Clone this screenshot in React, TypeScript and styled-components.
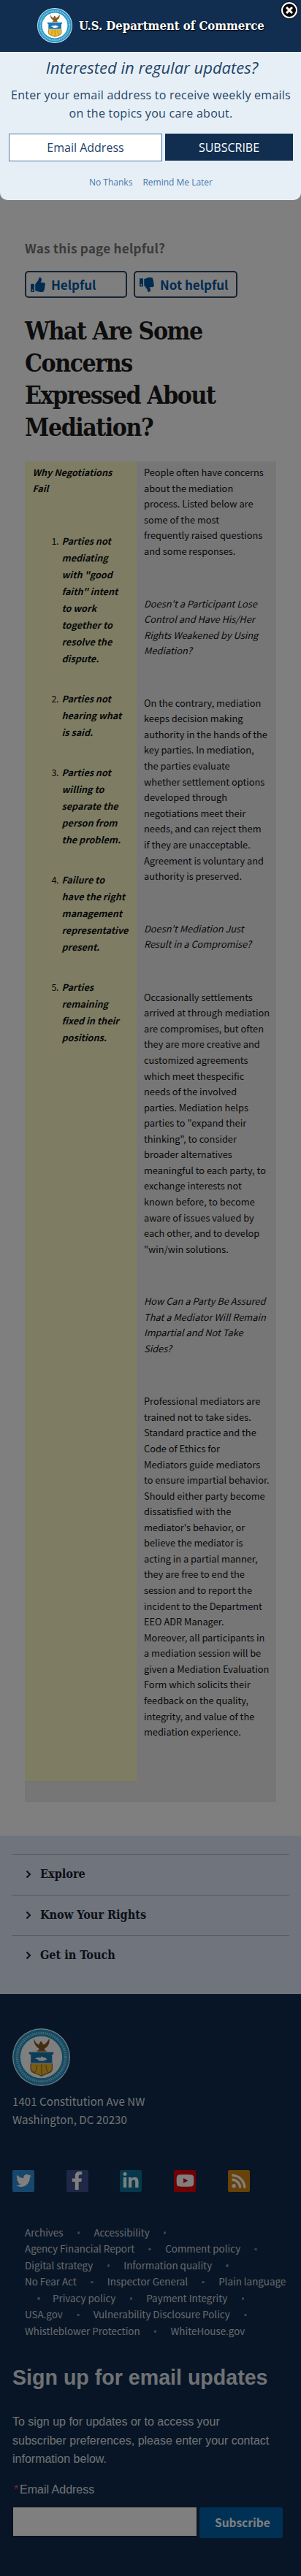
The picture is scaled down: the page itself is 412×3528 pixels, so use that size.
import React from "react";
import styled, { createGlobalStyle } from "styled-components";
import { FaThumbsUp, FaThumbsDown, FaFacebookF, FaLinkedinIn, FaTwitter, FaRss, FaYoutube } from "react-icons/fa";

const sans = `"Noto Sans CJK JP", "Noto Sans", sans-serif`;
const serif = `"DejaVu Serif Condensed", "DejaVu Serif", "Liberation Serif", serif`;

const Global = createGlobalStyle`
  *, *::before, *::after { box-sizing: border-box; }
  body { margin: 0; background: #fff; font-family: ${sans}; color: #1b1b1b; }
  p, h1, h2, ol, ul { margin: 0; padding: 0; }
  svg { display: block; flex: none; }
`;

const Page = styled.div`
  position: relative;
  width: 412px;
  height: 3528px;
  overflow: hidden;
`;
const Overlay = styled.div`
  position: absolute;
  inset: 0;
  background: rgba(0, 0, 0, 0.5);
`;
const Top = styled.div`
  position: absolute;
  inset: 0 0 auto 0;
`;
const Header = styled.header`
  height: 71px;
  background: #112e51;
  border-bottom: 1px solid #0b2341;
  display: flex;
  align-items: center;
  padding-left: 51px;
  gap: 9px;
`;
const Brand = styled.div`
  font: bold 16.6px/24px ${serif};
  color: #fff;
  white-space: nowrap;
  text-shadow: 1px 1px 2px #000;
`;
const Close = styled.button`
  position: absolute;
  top: 3px;
  right: 5px;
  width: 22px;
  height: 22px;
  padding: 0;
  border: 2px solid #fff;
  border-radius: 50%;
  background: #000;
  display: grid;
  place-items: center;
  box-shadow: 0 0 3px #000;
`;
const Modal = styled.section`
  height: 203px;
  background: #e7eff6;
  border-radius: 0 0 10px 10px;
  padding: 0 11px 0 12px;
  text-align: center;
  font-family: "Open Sans", sans-serif;
  color: #1f4468;
  white-space: nowrap;
`;
const ModalTitle = styled.h2`
  font: italic 400 22px/30px "Open Sans", sans-serif;
  padding-top: 6px;
  padding-left: 3px;
`;
const ModalText = styled.p`
  font-size: 16px;
  letter-spacing: 0.25px;
  line-height: 25px;
  margin-top: 11px;
`;
const ModalForm = styled.div`
  display: flex;
  gap: 4px;
  margin-top: 15px;
  font-size: 16px;
`;
const ModalField = styled.div`
  width: 210px;
  height: 38px;
  background: #fff;
  border: 1px solid #4a78a8;
  line-height: 37px;
`;
const ModalSubmit = styled.div`
  flex: 1;
  height: 37px;
  background: #112e51;
  color: #fff;
  line-height: 38px;
`;
const ModalLinks = styled.div`
  display: flex;
  justify-content: center;
  gap: 14px;
  margin-top: 20px;
  color: #4478ac;
  font-size: 12px;
  line-height: 18px;
`;

const Main = styled.main`
  height: 2514px;
  padding: 327px 34px 0;
`;
const Question = styled.div`
  font-weight: 700;
  font-size: 17.2px;
  line-height: 26px;
  color: #757575;
  letter-spacing: 0.2px;
`;
const Votes = styled.div`
  display: flex;
  gap: 9px;
  margin-top: 18px;
`;
const Vote = styled.button<{ $w: number }>`
  width: ${(p) => p.$w}px;
  height: 37px;
  border: 2px solid #2a4564;
  border-radius: 5px;
  background: transparent;
  padding: 0 0 0 6px;
  display: flex;
  align-items: center;
  gap: 8px;
  color: #0057a3;
  font: bold 17px/30px ${sans};
  white-space: nowrap;
`;
const Title = styled.h1`
  font: bold 33.5px/44px ${serif};
  margin-top: 24px;
  white-space: nowrap;
  letter-spacing: -1.45px;
`;
const Table = styled.div`
  display: grid;
  grid-template-columns: 153px 191px;
  grid-template-rows: 1807px 29px;
  margin-top: 24px;
  background: #ececec;
  color: #101010;
  white-space: nowrap;
`;
const Left = styled.div`
  background: #fdfac6;
  padding: 4px 0 0 10.5px;
  font-weight: 700;
  font-style: italic;
  font-size: 12.6px;
  line-height: 21.5px;
`;
const Right = styled.div`
  padding: 4px 0 0 10px;
  font-size: 12.8px;
`;
const Reasons = styled.ol`
  list-style: none;
  margin-top: 49.5px;
`;
const Reason = styled.li`
  display: flex;
  padding-left: 26px;
  line-height: 23px;
  margin-bottom: 32px;
  > span { width: 14px; font-weight: 400; font-style: normal; letter-spacing: -0.5px; }
`;
const Block = styled.p<{ $lh: number; $top?: number; $italic?: boolean }>`
  line-height: ${(p) => p.$lh}px;
  margin-top: ${(p) => p.$top ?? 0}px;
  font-style: ${(p) => (p.$italic ? "italic" : "normal")};
`;

const Menu = styled.nav`
  height: 217px;
  background: #e0e8f8;
  padding: 25px 16px 0;
`;
const MenuItem = styled.div`
  height: 55.5px;
  border-top: 1px solid #aab0bc;
  display: flex;
  align-items: center;
  gap: 12px;
  padding-left: 19px;
  font: bold 16.1px/24px ${serif};
  color: #14202f;
`;
const Footer = styled.footer`
  height: 797px;
  background: #112b4c;
  color: #dfe3e8;
  padding: 47px 17px 0;
  white-space: nowrap;
`;
const Address = styled.p`
  font-size: 15px;
  line-height: 25px;
  letter-spacing: 0.08px;
  margin-top: 8px;
`;
const Social = styled.div`
  display: flex;
  gap: 43.7px;
  margin-top: 56.5px;
`;
const SocialIcon = styled.span<{ $bg: string }>`
  width: 30px;
  height: 30px;
  background: ${(p) => p.$bg};
  border-radius: 2px;
  display: grid;
  place-items: center;
  color: #fff;
`;
const LinkRows = styled.div`
  margin: 44px 0 0 17px;
  font-size: 13.4px;
  line-height: 22.5px;
  color: #cdd3db;
`;
const LinkRow = styled.div`
  display: flex;
  height: 22.5px;
`;
const Dot = styled.i`
  width: 42px;
  display: grid;
  place-items: center;
  padding-top: 2px;
  &:first-child { width: 38px; }
  &::before { content: ""; width: 3.500px; height: 3.500px; border-radius: 50%; background: #6d8a9c; }
`;
const Signup = styled.section`
  font-family: "Liberation Sans", sans-serif;
  margin-top: 32px;
`;
const SignupTitle = styled.h2`
  font: bold 28.6px/42px "Liberation Sans", sans-serif;
`;
const SignupText = styled.p`
  font-size: 16px;
  line-height: 25.5px;
  margin-top: 27px;
`;
const Label = styled.div`
  font-size: 16px;
  line-height: 24px;
  margin-top: 17px;
  > span { color: #e8406c; display: inline-block; width: 10px; text-align: center; }
`;
const SignupForm = styled.div`
  display: flex;
  gap: 3px;
  margin-top: 11px;
`;
const SignupField = styled.div`
  width: 253px;
  height: 41px;
  background: #fff;
  border: 1px solid #222;
`;
const SignupButton = styled.div`
  width: 114px;
  height: 42px;
  margin-top: 1.5px;
  background: #0062a8;
  border-radius: 3px;
  color: #fff;
  font: bold 15.5px/41px ${sans};
  padding-left: 21px;
`;

function Seal({ size }: { size: number }) {
  return (
    <svg width={size} height={size} viewBox="0 0 80 80">
      <circle cx="40" cy="40" r="40" fill="#cfeaf6" />
      <circle cx="40" cy="40" r="33.500" fill="none" stroke="#2596c6" strokeWidth="10" />
      <circle cx="40" cy="40" r="33.500" fill="none" stroke="#d8f0fa" strokeOpacity=".65" strokeWidth="3.600" strokeDasharray="1.500 1.400" />
      <circle cx="40" cy="40" r="29" fill="#fff" />
      <path d="M30 14c1.500 5 3.500 8 7 8.500L38.500 18l3 1 .8 3.500C46 22 48.500 18.500 51 14c1 6-1 11-6.500 14l1 3.500H35.500l1.500-3.500c-5-2.500-8-8-7-14Z" fill="#8a5a22" />
      <path d="M34 31.500h13" stroke="#b07a28" strokeWidth="1.500" />
      <path d="M23 33h34v2.500l-2 1V49H25.500V36.500l-2.500-1Z" fill="#1b78b0" />
      <path d="M25.500 49H55v8c0 5-8.500 5-14.700 9-6.300-4-14.800-4-14.800-9Z" fill="#ecb82e" stroke="#8a6216" strokeWidth="1.200" />
      <path d="M25.500 48.500H55" stroke="#fff" strokeWidth="1.200" />
      <path d="m31 42 5-2 3 1 1-2 6 2 2 2-5 2h-6l-2-2Z" fill="#fff" />
      <path d="M40.300 50v14M34 51c0 5-1 8-3 10M46.500 51c0 5 1 8 3 10" fill="none" stroke="#a87512" strokeWidth="1.200" />
    </svg>
  );
}

function Lines({ text }: { text: string }) {
  return (
    <>
      {text.split("|").map((line, i) => (
        <React.Fragment key={i}>
          {i > 0 && <br />}
          {line}
        </React.Fragment>
      ))}
    </>
  );
}

const reasons = [
  "Parties not|mediating|with \"good|faith\" intent|to work|together to|resolve the|dispute.",
  "Parties not|hearing what|is said.",
  "Parties not|willing to|separate the|person from|the problem.",
  "Failure to|have the right|management|representative|present.",
  "Parties|remaining|fixed in their|positions.",
];

const linkRows = [
  ["Archives", "•", "Accessibility", "•"],
  ["Agency Financial Report", "•", "Comment policy", "•"],
  ["Digital strategy", "•", "Information quality", "•"],
  ["No Fear Act", "•", "Inspector General", "•", "Plain language"],
  ["•", "Privacy policy", "•", "Payment Integrity", "•"],
  ["USA.gov", "•", "Vulnerability Disclosure Policy", "•"],
  ["Whistleblower Protection", "•", "WhiteHouse.gov"],
];

export default function App() {
  return (
    <Page>
      <Global />
      <Main>
        <Question>Was this page helpful?</Question>
        <Votes>
          <Vote $w={140}><FaThumbsUp size={20} />Helpful</Vote>
          <Vote $w={142}><FaThumbsDown size={20} />Not helpful</Vote>
        </Votes>
        <Title><Lines text="What Are Some|Concerns|Expressed About|Mediation?" /></Title>
        <Table>
          <Left>
            <Lines text="Why Negotiations|Fail" />
            <Reasons>
              {reasons.map((r, i) => (
                <Reason key={i}><span>{i + 1}.</span><div><Lines text={r} /></div></Reason>
              ))}
            </Reasons>
          </Left>
          <Right>
            <Block $lh={21.6}><Lines text="People often have concerns|about the mediation|process. Listed below are|some of the most|frequently raised questions|and some responses." /></Block>
            <Block $lh={21.5} $top={50} $italic><Lines text="Doesn't a Participant Lose|Control and Have His/Her|Rights Weakened by Using|Mediation?" /></Block>
            <Block $lh={21.6} $top={50}><Lines text="On the contrary, mediation|keeps decision making|authority in the hands of the|key parties. In mediation,|the parties evaluate|whether settlement options|developed through|negotiations meet their|needs, and can reject them|if they are unacceptable.|Agreement is voluntary and|authority is preserved." /></Block>
            <Block $lh={21.5} $top={50} $italic><Lines text="Doesn't Mediation Just|Result in a Compromise?" /></Block>
            <Block $lh={21.57} $top={51}><Lines text={"Occasionally settlements|arrived at through mediation|are compromises, but often|they are more creative and|customized agreements|which meet thespecific|needs of the involved|parties. Mediation helps|parties to \"expand their|thinking\", to consider|broader alternatives|meaningful to each party, to|exchange interests not|known before, to become|aware of issues valued by|each other, and to develop|\"win/win solutions."} /></Block>
            <Block $lh={21.5} $top={50} $italic><Lines text="How Can a Party Be Assured|That a Mediator Will Remain|Impartial and Not Take|Sides?" /></Block>
            <Block $lh={21.57} $top={51}><Lines text="Professional mediators are|trained not to take sides.|Standard practice and the|Code of Ethics for|Mediators guide mediators|to ensure impartial behavior.|Should either party become|dissatisfied with the|mediator's behavior, or|believe the mediator is|acting in a partial manner,|they are free to end the|session and to report the|incident to the Department|EEO ADR Manager.|Moreover, all participants in|a mediation session will be|given a Mediation Evaluation|Form which solicits their|feedback on the quality,|integrity, and value of the|mediation experience." /></Block>
          </Right>
        </Table>
      </Main>
      <Menu>
        {["Explore", "Know Your Rights", "Get in Touch"].map((t) => (
          <MenuItem key={t}>
            <svg width="8" height="12" viewBox="0 0 8 12"><path d="M1.500 1.500 6 6l-4.500 4.500" fill="none" stroke="#14202f" strokeWidth="2" /></svg>
            {t}
          </MenuItem>
        ))}
      </Menu>
      <Footer>
        <Seal size={79} />
        <Address>1401 Constitution Ave NW<br />Washington, DC 20230</Address>
        <Social>
          <SocialIcon $bg="#2f8fd8"><FaTwitter size={21} /></SocialIcon>
          <SocialIcon $bg="#3f4f8c"><FaFacebookF size={25} /></SocialIcon>
          <SocialIcon $bg="#087099"><FaLinkedinIn size={24} /></SocialIcon>
          <SocialIcon $bg="#e00008"><FaYoutube size={25} /></SocialIcon>
          <SocialIcon $bg="#d08410"><FaRss size={22} /></SocialIcon>
        </Social>
        <LinkRows>
          {linkRows.map((row, i) => (
            <LinkRow key={i}>{row.map((t, j) => (t === "•" ? <Dot key={j} /> : <span key={j}>{t}</span>))}</LinkRow>
          ))}
        </LinkRows>
        <Signup>
          <SignupTitle>Sign up for email updates</SignupTitle>
          <SignupText><Lines text="To sign up for updates or to access your|subscriber preferences, please enter your contact|information below." /></SignupText>
          <Label><span>*</span>Email Address</Label>
          <SignupForm>
            <SignupField />
            <SignupButton>Subscribe</SignupButton>
          </SignupForm>
        </Signup>
      </Footer>
      <Overlay />
      <Top>
        <Header>
          <Seal size={48} />
          <Brand>U.S. Department of Commerce</Brand>
        </Header>
        <Modal>
          <ModalTitle>Interested in regular updates?</ModalTitle>
          <ModalText>Enter your email address to receive weekly emails<br />on the topics you care about.</ModalText>
          <ModalForm>
            <ModalField>Email Address</ModalField>
            <ModalSubmit>SUBSCRIBE</ModalSubmit>
          </ModalForm>
          <ModalLinks><span>No Thanks</span><span>Remind Me Later</span></ModalLinks>
        </Modal>
        <Close aria-label="Close">
          <svg width="10" height="10" viewBox="0 0 10 10"><path d="m1 1 8 8M9 1 1 9" stroke="#fff" strokeWidth="3" /></svg>
        </Close>
      </Top>
    </Page>
  );
}
